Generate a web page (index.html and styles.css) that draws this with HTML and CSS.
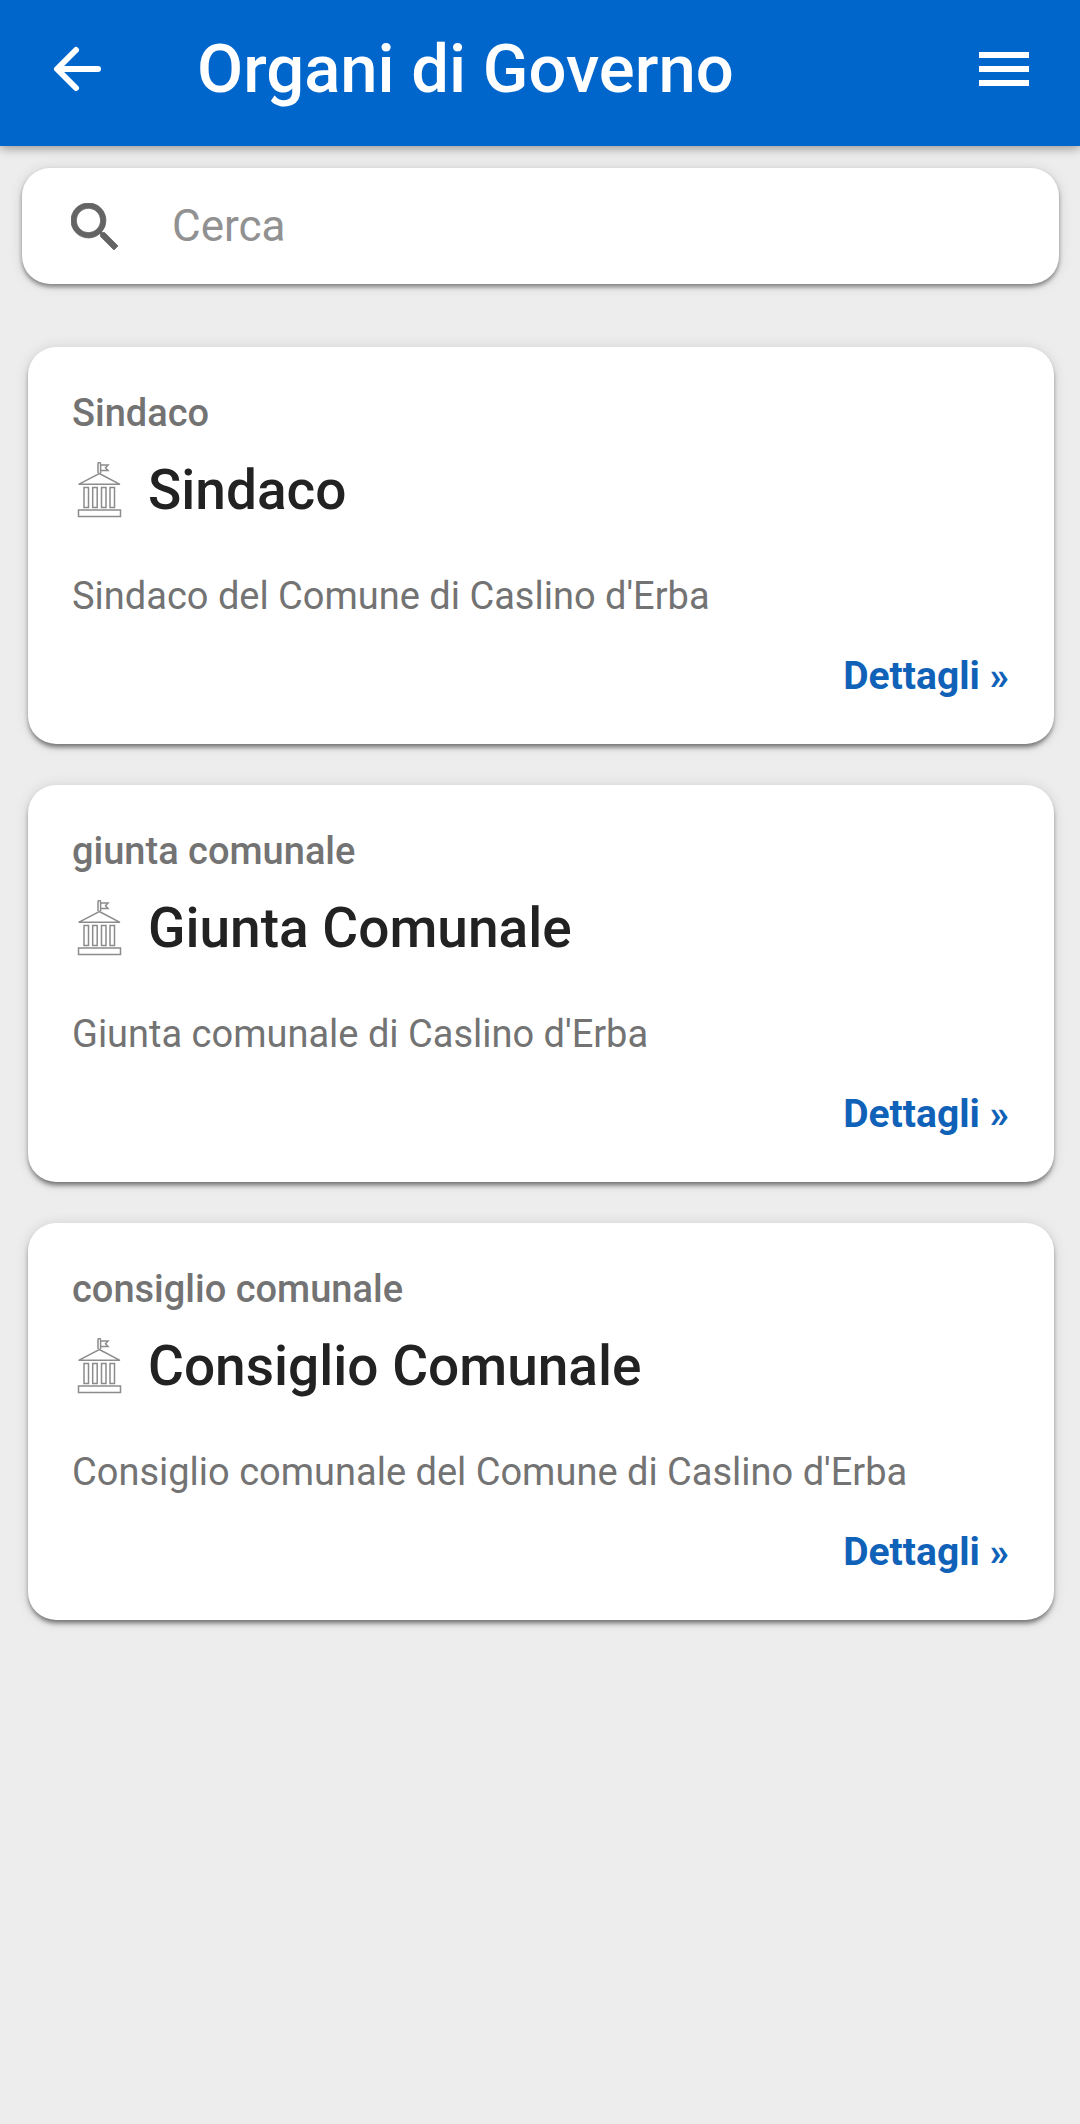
FILE: index.html
```
<!DOCTYPE html>
<html lang="it">
<head>
  <meta charset="UTF-8">
  <meta name="viewport" content="width=device-width, initial-scale=1">
  <title>Organi di Governo</title>
  <link rel="stylesheet" href="styles.css">
</head>
<body>

<!-- Icona edificio, usata in tutte le card -->
<svg class="sprite" aria-hidden="true">
  <symbol id="palazzo" viewBox="0 0 56 56">
    <path d="M26 11V2q0-1.500 1.300-1.500T28.600 2v9M28.600 3H36l-2.500 2.700L36 8.500h-7.400M27.300 11.500L48 22.300H6.600zM12 25.500h4.500v20H12zM20.700 25.500h4.500v20h-4.500zM29.500 25.500H34v20h-4.500zM38 25.500h4.500v20H38zM6.500 48h42v6.500h-42z"/>
  </symbol>
</svg>

<header class="topbar">
  <button class="icon-button" type="button" aria-label="Indietro">
    <svg class="back-icon" viewBox="0 0 48 48">
      <path d="M23 5L4 24l19 19M5 24h40"/>
    </svg>
  </button>
  <h1>Organi di Governo</h1>
  <button class="icon-button" type="button" aria-label="Menu">
    <svg class="menu-icon" viewBox="0 0 50 34">
      <path d="M0 0h50v6H0zM0 14h50v6H0zM0 28h50v6H0z"/>
    </svg>
  </button>
</header>

<main>
  <label class="search">
    <svg class="search-icon" viewBox="3 3 17.500 17.500">
      <path d="M15.500 14h-.79l-.28-.27A6.471 6.471 0 0 0 16 9.500 6.500 6.500 0 1 0 9.500 16c1.610 0 3.090-.59 4.230-1.570l.27.28v.79l5 4.990L20.490 19l-4.990-5zm-6 0C7.010 14 5 11.990 5 9.500S7.010 5 9.500 5 14 7.010 14 9.500 11.990 14 9.500 14z"/>
    </svg>
    <input type="search" placeholder="Cerca" aria-label="Cerca">
  </label>

  <div class="cards">
    <article class="card">
      <p class="category">Sindaco</p>
      <div class="card-title">
        <svg class="card-icon"><use href="#palazzo"/></svg>
        <h2>Sindaco</h2>
      </div>
      <p class="description">Sindaco del Comune di Caslino d'Erba</p>
      <a class="details" href="#">Dettagli »</a>
    </article>

    <article class="card">
      <p class="category">giunta comunale</p>
      <div class="card-title">
        <svg class="card-icon"><use href="#palazzo"/></svg>
        <h2>Giunta Comunale</h2>
      </div>
      <p class="description">Giunta comunale di Caslino d'Erba</p>
      <a class="details" href="#">Dettagli »</a>
    </article>

    <article class="card">
      <p class="category">consiglio comunale</p>
      <div class="card-title">
        <svg class="card-icon"><use href="#palazzo"/></svg>
        <h2>Consiglio Comunale</h2>
      </div>
      <p class="description">Consiglio comunale del Comune di Caslino d'Erba</p>
      <a class="details" href="#">Dettagli »</a>
    </article>
  </div>
</main>

</body>
</html>
```
FILE: styles.css
```
* {
  box-sizing: border-box;
}

body {
  margin: 0;
  font-family: Roboto, sans-serif;
  background: #ededed;
  color: #222;
}

h1, h2, p {
  margin: 0;
  font-weight: 500;
}

.sprite {
  display: none;
}

/* Barra in alto */
.topbar {
  display: flex;
  align-items: center;
  padding: 30px 51px 38px;
  background: #0066cc;
  color: #fff;
  box-shadow: 0 2px 10px rgba(0, 0, 0, 0.4);
}

.topbar h1 {
  flex: 1;
  margin-left: 94px;
  font-size: 67px;
  line-height: 78px;
}

.icon-button {
  display: flex;
  padding: 0;
  border: none;
  background: none;
  color: inherit;
  cursor: pointer;
}

.back-icon {
  width: 52px;
  height: 48px;
  fill: none;
  stroke: currentColor;
  stroke-width: 6;
  stroke-linecap: round;
  stroke-linejoin: round;
}

.menu-icon {
  width: 50px;
  height: 34px;
  fill: currentColor;
}

/* Ricerca */
.search {
  display: flex;
  align-items: center;
  gap: 54px;
  height: 116px;
  margin: 22px 21px 0 22px;
  padding: 0 49px;
  border-radius: 28px;
  background: #fff;
  box-shadow: 0 3px 4px rgba(0, 0, 0, 0.4), 0 1px 14px rgba(0, 0, 0, 0.12);
}

.search-icon {
  width: 47px;
  height: 47px;
  fill: #646464;
  stroke: #646464;
  stroke-width: 0.3;
}

.search input {
  flex: 1;
  min-width: 0;
  padding: 0;
  border: none;
  outline: none;
  background: none;
  font: inherit;
  font-size: 44px;
  line-height: 52px;
}

.search input::placeholder {
  color: #919191;
}

/* Card */
.cards {
  display: flex;
  flex-direction: column;
  gap: 41px;
  padding: 63px 26px 40px 28px;
}

.card {
  display: flex;
  flex-direction: column;
  padding: 42px 45px 44px 44px;
  border-radius: 28px;
  background: #fff;
  box-shadow: 0 4px 5px -1px rgba(0, 0, 0, 0.5), 0 1px 14px rgba(0, 0, 0, 0.12);
}

.category,
.description,
.details {
  font-size: 39px;
  line-height: 48px;
}

.category,
.description {
  font-size: 38px;
  color: #737373;
}

.card-title {
  display: flex;
  align-items: center;
  gap: 20px;
  margin: 21px 0 50px;
}

.card-title h2 {
  font-size: 55px;
  line-height: 64px;
}

.card-icon {
  width: 56px;
  height: 56px;
  fill: none;
  stroke: #8c8c8c;
  stroke-width: 1.500;
}

.description {
  font-weight: 400;
}

.details {
  align-self: flex-end;
  margin-top: 32px;
  color: #1062b8;
  font-weight: 700;
  text-decoration: none;
}
```
